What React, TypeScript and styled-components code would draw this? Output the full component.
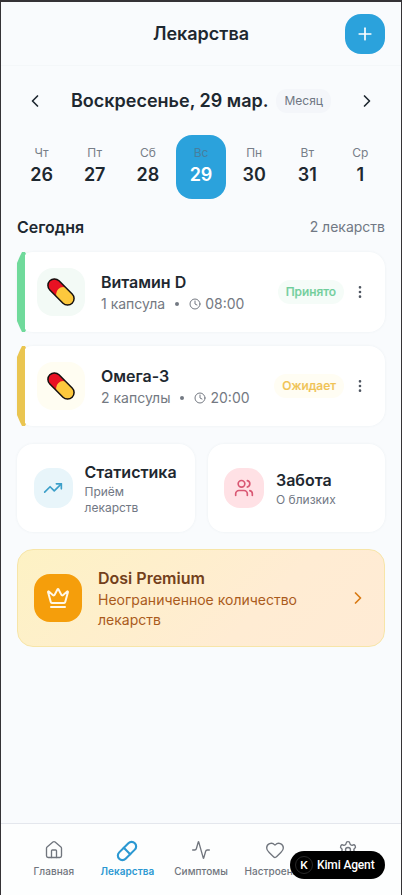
import React from "react";
import styled, { createGlobalStyle, css } from "styled-components";
import {
  Activity, ChevronLeft, ChevronRight, Clock, Crown, EllipsisVertical,
  Heart, House, Pill, Plus, Settings, TrendingUp, Users,
} from "lucide-react";

const GlobalStyle = createGlobalStyle`
  *, *::before, *::after { box-sizing: border-box; }
  body { margin: 0; background: #353336; font-family: Inter, "Noto Sans", sans-serif; color: #1e2830; }
  button { font: inherit; border: 0; padding: 0; background: none; color: inherit; }
  h1, h2, h3, p { margin: 0; }
  svg { display: block; flex: none; }
`;

const Frame = styled.div`
  height: 895px;
  border: solid #353336;
  border-width: 2px 1px 0;
  background: #f9fbfd;
  display: flex;
  flex-direction: column;
  overflow: hidden;
`;

const Header = styled.header`
  height: 64px;
  flex: none;
  display: grid;
  grid-template-columns: 40px 1fr 40px;
  align-items: center;
  padding: 0 16px;
  border-bottom: 1px solid #f4f7f9;
`;

const Title = styled.h1`
  grid-column: 2;
  text-align: center;
  font-size: 18px;
  font-weight: 600;
  line-height: 28px;
`;

const AddButton = styled.button`
  width: 40px;
  height: 40px;
  border-radius: 16px;
  background: #2ba2dc;
  color: #fff;
  display: grid;
  place-items: center;
`;

const Main = styled.main`
  flex: 1;
  padding: 16px 16px 0;
`;

const DateBar = styled.div`
  height: 37px;
  display: flex;
  align-items: center;
  justify-content: space-between;
`;

const ArrowButton = styled.button`
  width: 36px;
  height: 36px;
  display: grid;
  place-items: center;
`;

const DateLabel = styled.div`
  display: flex;
  align-items: center;
  gap: 8px;
  font-size: 18px;
  font-weight: 600;
  line-height: 28px;
  white-space: nowrap;
`;

const MonthChip = styled.span`
  padding: 4px 8px;
  border-radius: 11px;
  background: #f4f6fa;
  color: #6f7783;
  font-size: 12px;
  font-weight: 400;
  line-height: 16px;
`;

const Week = styled.div`
  display: grid;
  grid-template-columns: repeat(7, 1fr);
  gap: 4px;
  margin-top: 16px;
`;

const Day = styled.div<{ $active?: boolean }>`
  height: 64px;
  padding-top: 10px;
  border-radius: 16px;
  text-align: center;
  font-size: 18px;
  font-weight: 600;
  line-height: 28px;
  ${(p) => p.$active && css`background: #2ba2dc; color: #fff;`}
`;

const DayName = styled.div<{ $active?: boolean }>`
  font-size: 12px;
  font-weight: 400;
  line-height: 16px;
  color: ${(p) => (p.$active ? "#467f9f" : "#777e88")};
`;

const SectionHead = styled.div`
  display: flex;
  justify-content: space-between;
  align-items: center;
  margin-top: 16px;
  height: 24px;
`;

const SectionTitle = styled.h2`
  font-size: 16px;
  font-weight: 600;
  line-height: 24px;
`;

const Muted = styled.span`
  color: #717884;
  font-size: 14px;
  line-height: 20px;
`;

const MedicineList = styled.div`
  margin-top: 13px;
  display: grid;
  gap: 14px;
`;

const cardShadow = css`
  background: #fff;
  box-shadow: 0 0 3px rgba(40, 65, 85, 0.06);
`;

const MedicineCard = styled.article`
  ${cardShadow}
  height: 80px;
  border-radius: 16px;
  display: flex;
  align-items: center;
  padding-right: 16px;
`;

const Stripe = styled.div<{ $color: string }>`
  align-self: stretch;
  width: 9px;
  margin-right: -1px;
  background: ${(p) => p.$color};
  clip-path: polygon(5px 0, 8px 0, 9px 2px, 8px 3px, 8px 77px, 9px 78px, 8px 80px, 5px 80px, 3px 76px, 0 69px, 0 11px, 3px 4px);
`;

const Tile = styled.div<{ $size: number; $bg: string; $color?: string }>`
  flex: none;
  width: ${(p) => p.$size}px;
  height: ${(p) => Math.max(p.$size, 40)}px;
  border-radius: 16px;
  background: ${(p) => p.$bg};
  color: ${(p) => p.$color};
  display: grid;
  place-items: center;
`;

const MedicineTile = styled(Tile)`
  margin: 0 16px 0 12px;
`;

const Grow = styled.div`
  flex: 1;
  min-width: 0;
`;

const CardTitle = styled.h3<{ $color?: string }>`
  font-size: 16px;
  font-weight: 600;
  line-height: 24px;
  color: ${(p) => p.$color};
`;

const Dose = styled.div`
  display: flex;
  align-items: center;
  font-size: 14px;
  line-height: 20px;
  color: #747982;
  white-space: nowrap;
`;

const Dot = styled.span`
  width: 4px;
  height: 4px;
  border-radius: 50%;
  background: #737982;
  margin: 0 10px;
`;

const Time = styled.span`
  display: flex;
  align-items: center;
  gap: 4px;
`;

const Status = styled.span<{ $color: string; $bg: string }>`
  padding: 4px 8px;
  border-radius: 12px;
  font-size: 12px;
  font-weight: 500;
  -webkit-text-stroke: 0.2px currentColor;
  line-height: 16px;
  color: ${(p) => p.$color};
  background: ${(p) => p.$bg};
  margin-right: 7px;
`;

const MenuButton = styled.button`
  color: #4f5661;
  width: 18px;
  display: grid;
  place-items: center;
`;

const QuickGrid = styled.div`
  margin-top: 18px;
  display: grid;
  grid-template-columns: 1fr 1fr;
  gap: 13px;
`;

const QuickCard = styled.article`
  ${cardShadow}
  height: 88px;
  border-radius: 16px;
  display: flex;
  align-items: center;
  gap: 12px;
  padding: 0 16px 0 17px;
`;

const CareCard = styled(QuickCard)`
  padding-left: 16.5px;
`;

const SmallText = styled.p`
  color: #717884;
  font-size: 12px;
  line-height: 16px;
`;

const PremiumCard = styled.article`
  margin-top: 17px;
  height: 98px;
  border: 1px solid #f7e5a8;
  border-radius: 16px;
  background: linear-gradient(135deg, #fdf2c4, #ffecd3 65%, #ffebd5);
  display: flex;
  align-items: center;
  gap: 16px;
  padding: 0 16px;
`;

const PremiumText = styled.p`
  color: #aa5b1c;
  font-size: 14px;
  line-height: 20px;
`;

const PremiumArrow = styled.div`
  color: #d97b15;
`;

const Nav = styled.nav`
  flex: none;
  height: 72px;
  border-top: 1px solid #e4e7ed;
  background: #fdfefe;
  padding: 15px 16px 0;
  display: grid;
  grid-template-columns: repeat(5, 1fr);
`;

const NavItem = styled.div<{ $active?: boolean }>`
  display: flex;
  flex-direction: column;
  align-items: center;
  min-width: 0;
  font-size: 10px;
  line-height: 15px;
  letter-spacing: 0.04px;
  font-weight: ${(p) => (p.$active ? 600 : 500)};
  color: ${(p) => (p.$active ? "#2b98d2" : "#70757d")};
  white-space: nowrap;
`;

const NavIcon = styled.span`
  height: 25px;
  padding-top: 1px;
  display: flex;
  align-items: flex-start;
`;

const AgentBadge = styled.div`
  position: absolute;
  left: 290px;
  top: 851px;
  width: 95px;
  height: 28px;
  border-radius: 14px;
  background: #000;
  color: #fff;
  display: flex;
  align-items: center;
  gap: 4px;
  padding-left: 5px;
  font: 500 12px Roboto, sans-serif;
  letter-spacing: -0.15px;
  white-space: nowrap;
`;

const AgentMark = styled.span`
  width: 18px;
  height: 18px;
  border: 1px solid #292929;
  border-radius: 50%;
  display: grid;
  place-items: center;
  font: 600 11px Inter, sans-serif;
`;

const Capsule = () => (
  <svg width="28" height="28" viewBox="0 0 28 28">
    <g transform="rotate(45 14 14)">
      <path d="M14 7.7H4.3a6.3 6.3 0 0 0 0 12.6H14z" fill="#e81123" />
      <path d="M14 7.7h9.7a6.3 6.3 0 0 1 0 12.6H14a7 7 0 0 1 0-12.6z" fill="#fcc83d" />
      <rect x="-1.8" y="7.5" width="31.6" height="13" rx="6.5" fill="none" stroke="#15100f" strokeWidth="1.5" />
    </g>
  </svg>
);

const days = [["Чт", 26], ["Пт", 27], ["Сб", 28], ["Вс", 29], ["Пн", 30], ["Вт", 31], ["Ср", 1]] as const;

const medicines = [
  { name: "Витамин D", dose: "1 капсула", time: "08:00", status: "Принято", color: "#70da9b", text: "#70ce9b", bg: "#f5fcf8", tile: "#f3faf6" },
  { name: "Омега-3", dose: "2 капсулы", time: "20:00", status: "Ожидает", color: "#eac550", text: "#f0c353", bg: "#fffdf3", tile: "#fffdf2" },
];

const tabs = [
  { label: "Главная", Icon: House },
  { label: "Лекарства", Icon: Pill, active: true },
  { label: "Симптомы", Icon: Activity },
  { label: "Настроение", Icon: Heart },
  { label: "Настройки", Icon: Settings },
];

export default function App() {
  return (
    <>
      <GlobalStyle />
      <Frame>
        <Header>
          <Title>Лекарства</Title>
          <AddButton aria-label="Добавить"><Plus size={20} strokeWidth={2} /></AddButton>
        </Header>
        <Main>
          <DateBar>
            <ArrowButton><ChevronLeft size={20} /></ArrowButton>
            <DateLabel>Воскресенье, 29 мар.<MonthChip>Месяц</MonthChip></DateLabel>
            <ArrowButton><ChevronRight size={20} /></ArrowButton>
          </DateBar>
          <Week>
            {days.map(([name, number]) => (
              <Day key={name} $active={number === 29}>
                <DayName $active={number === 29}>{name}</DayName>
                {number}
              </Day>
            ))}
          </Week>
          <SectionHead>
            <SectionTitle>Сегодня</SectionTitle>
            <Muted>2 лекарств</Muted>
          </SectionHead>
          <MedicineList>
            {medicines.map((m) => (
              <MedicineCard key={m.name}>
                <Stripe $color={m.color} />
                <MedicineTile $size={48} $bg={m.tile}><Capsule /></MedicineTile>
                <Grow>
                  <CardTitle>{m.name}</CardTitle>
                  <Dose>{m.dose}<Dot /><Time><Clock size={12} />{m.time}</Time></Dose>
                </Grow>
                <Status $color={m.text} $bg={m.bg}>{m.status}</Status>
                <MenuButton><EllipsisVertical size={16} /></MenuButton>
              </MedicineCard>
            ))}
          </MedicineList>
          <QuickGrid>
            <QuickCard>
              <Tile $size={38.5} $bg="#e8f5fa" $color="#3c9fc9"><TrendingUp size={20} strokeWidth={2} /></Tile>
              <Grow><CardTitle>Статистика</CardTitle><SmallText>Приём лекарств</SmallText></Grow>
            </QuickCard>
            <CareCard>
              <Tile $size={40} $bg="#ffe1e5" $color="#d95873"><Users size={20} strokeWidth={2} /></Tile>
              <Grow><CardTitle>Забота</CardTitle><SmallText>О близких</SmallText></Grow>
            </CareCard>
          </QuickGrid>
          <PremiumCard>
            <Tile $size={48} $bg="#f59e0b" $color="#fff8e8"><Crown size={24} /></Tile>
            <Grow>
              <CardTitle $color="#73401b">Dosi Premium</CardTitle>
              <PremiumText>Неограниченное количество лекарств</PremiumText>
            </Grow>
            <PremiumArrow><ChevronRight size={20} strokeWidth={2.1} /></PremiumArrow>
          </PremiumCard>
        </Main>
        <Nav>
          {tabs.map(({ label, Icon, active }) => (
            <NavItem key={label} $active={active}>
              <NavIcon><Icon size={active ? 22 : 20} strokeWidth={active ? 2.3 : 1.6} /></NavIcon>
              {label}
            </NavItem>
          ))}
        </Nav>
      </Frame>
      <AgentBadge><AgentMark>K</AgentMark>Kimi Agent</AgentBadge>
    </>
  );
}
